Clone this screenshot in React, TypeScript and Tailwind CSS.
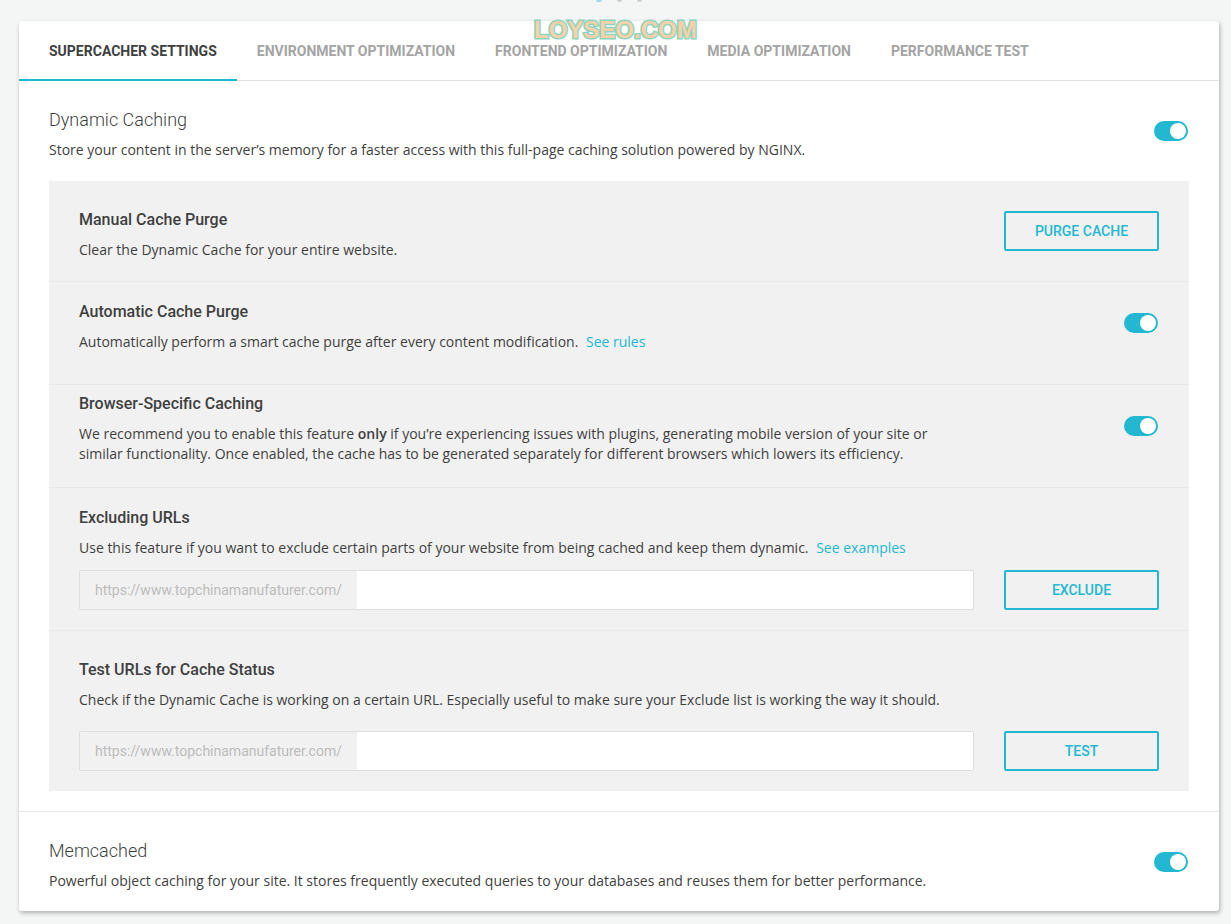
const Toggle = () => (
  <div className="w-[34px] h-5 mr-px rounded-full bg-[#22b8d1] flex items-center justify-end pr-[2px] shrink-0">
    <div className="w-4 h-4 rounded-full bg-white" />
  </div>
);

const OutlineButton = ({ label }: { label: string }) => (
  <button className="w-[155px] h-10 shrink-0 rounded-[2px] border-2 border-[#22b8d1] text-[#22b8d1] text-sm font-medium font-['Roboto',sans-serif]">
    {label}
  </button>
);

const UrlField = () => (
  <div className="w-[895px] h-10 flex rounded-[2px] border border-[#dedede] bg-white overflow-hidden">
    <div className="w-[277px] bg-[#f1f1f1] pl-[15px] flex items-center text-sm text-[#bcbcbc] font-['Roboto',sans-serif]">
      https://www.topchinamanufaturer.com/
    </div>
  </div>
);

const tabs = ['ENVIRONMENT OPTIMIZATION', 'FRONTEND OPTIMIZATION', 'MEDIA OPTIMIZATION', 'PERFORMANCE TEST'];

export default function App() {
  return (
    <div className="relative min-h-[924px] bg-[#f4f6f5] pt-[21px] px-[19px] font-['Open_Sans',sans-serif] text-[#3f3f3f] overflow-hidden">
      {/* loader dots cut off by the top of the page */}
      <div className="absolute top-0 left-[596px] flex gap-[15px]">
        <div className="w-[6px] h-[2px] rounded-b-full bg-[#9fdcea]" />
        <div className="w-[5px] h-[2px] rounded-b-full bg-[#c9cfcf]" />
        <div className="w-[5px] h-[2px] rounded-b-full bg-[#c9cfcf]" />
      </div>

      <div className="absolute top-[15px] left-[534px] z-10 text-[24px] leading-[30px] font-bold font-['Liberation_Sans',sans-serif] text-[#f5d2a9] [-webkit-text-stroke:3px_#8ed3bd] [paint-order:stroke_fill]">
        LOYSEO.COM
      </div>

      <div className="w-[1200px] h-[890px] bg-white rounded-[3px] shadow-[1px_2px_4px_rgba(0,0,0,0.3)]">
        <div className="h-[60px] flex border-b border-[#e0e0e0] font-['Roboto',sans-serif] text-sm font-bold">
          <div className="h-[60px] pl-[30px] pr-5 pt-px flex items-center text-[#3f3f3f] border-b-2 border-[#22b8d1]">
            SUPERCACHER SETTINGS
          </div>
          {tabs.map((tab) => (
            <div key={tab} className="px-5 flex items-center text-[#a4a4a4]">
              {tab}
            </div>
          ))}
        </div>

        <div className="h-[100px] px-[30px] flex items-center justify-between">
          <div className="pt-[6px]">
            <h2 className="text-lg leading-6 font-light font-['Roboto',sans-serif]">Dynamic Caching</h2>
            <p className="text-sm leading-5 mt-[8px]">
              Store your content in the server’s memory for a faster access with this full-page caching solution powered by NGINX.
            </p>
          </div>
          <Toggle />
        </div>

        <div className="mx-[30px] w-[1140px] bg-[#f1f1f1]">
          <div className="h-[101px] px-[30px] flex items-center justify-between border-b border-[#e8e8e8]">
            <div className="pt-[7px]">
              <h3 className="text-base leading-[22px] font-medium font-['Roboto',sans-serif]">Manual Cache Purge</h3>
              <p className="text-sm leading-5 mt-[9px]">Clear the Dynamic Cache for your entire website.</p>
            </div>
            <OutlineButton label="PURGE CACHE" />
          </div>

          <div className="h-[103px] px-[30px] pt-[19px] flex items-start justify-between border-b border-[#e8e8e8]">
            <div>
              <h3 className="text-base leading-[22px] font-medium font-['Roboto',sans-serif]">Automatic Cache Purge</h3>
              <p className="text-sm leading-5 mt-[9px]">
                Automatically perform a smart cache purge after every content modification.{' '}
                <a className="ml-1 text-[#22b8d1]">See rules</a>
              </p>
            </div>
            <div className="pt-[12px]">
              <Toggle />
            </div>
          </div>

          <div className="h-[103px] px-[30px] flex items-start justify-between border-b border-[#e8e8e8] pt-2">
            <div className="w-[880px]">
              <h3 className="text-base leading-[22px] font-medium font-['Roboto',sans-serif]">Browser-Specific Caching</h3>
              <p className="text-sm leading-5 mt-[9px]">
                We recommend you to enable this feature <b className="font-semibold">only</b> if you’re experiencing issues with plugins, generating mobile version of your site or similar functionality. Once enabled, the cache has to be generated separately for different browsers which lowers its efficiency.
              </p>
            </div>
            <div className="pt-[23px]">
              <Toggle />
            </div>
          </div>

          <div className="h-[143px] px-[30px] pt-[19px] border-b border-[#e8e8e8]">
            <h3 className="text-base leading-[22px] font-medium font-['Roboto',sans-serif]">Excluding URLs</h3>
            <p className="text-sm leading-5 mt-[9px]">
              Use this feature if you want to exclude certain parts of your website from being cached and keep them dynamic.{' '}
              <a className="ml-1 text-[#22b8d1]">See examples</a>
            </p>
            <div className="flex justify-between mt-3">
              <UrlField />
              <OutlineButton label="EXCLUDE" />
            </div>
          </div>

          <div className="h-[160px] px-[30px] pt-[28px]">
            <h3 className="text-base leading-[22px] font-medium font-['Roboto',sans-serif]">Test URLs for Cache Status</h3>
            <p className="text-sm leading-5 mt-[9px]">
              Check if the Dynamic Cache is working on a certain URL. Especially useful to make sure your Exclude list is working the way it should.
            </p>
            <div className="flex justify-between mt-[21px]">
              <UrlField />
              <OutlineButton label="TEST" />
            </div>
          </div>
        </div>

        <div className="mt-5 border-t border-[#e8e8e8] h-[100px] px-[30px] flex items-center justify-between">
          <div className="pt-[6px]">
            <h2 className="text-lg leading-6 font-light font-['Roboto',sans-serif]">Memcached</h2>
            <p className="text-sm leading-5 mt-[8px]">
              Powerful object caching for your site. It stores frequently executed queries to your databases and reuses them for better performance.
            </p>
          </div>
          <Toggle />
        </div>
      </div>
    </div>
  );
}
